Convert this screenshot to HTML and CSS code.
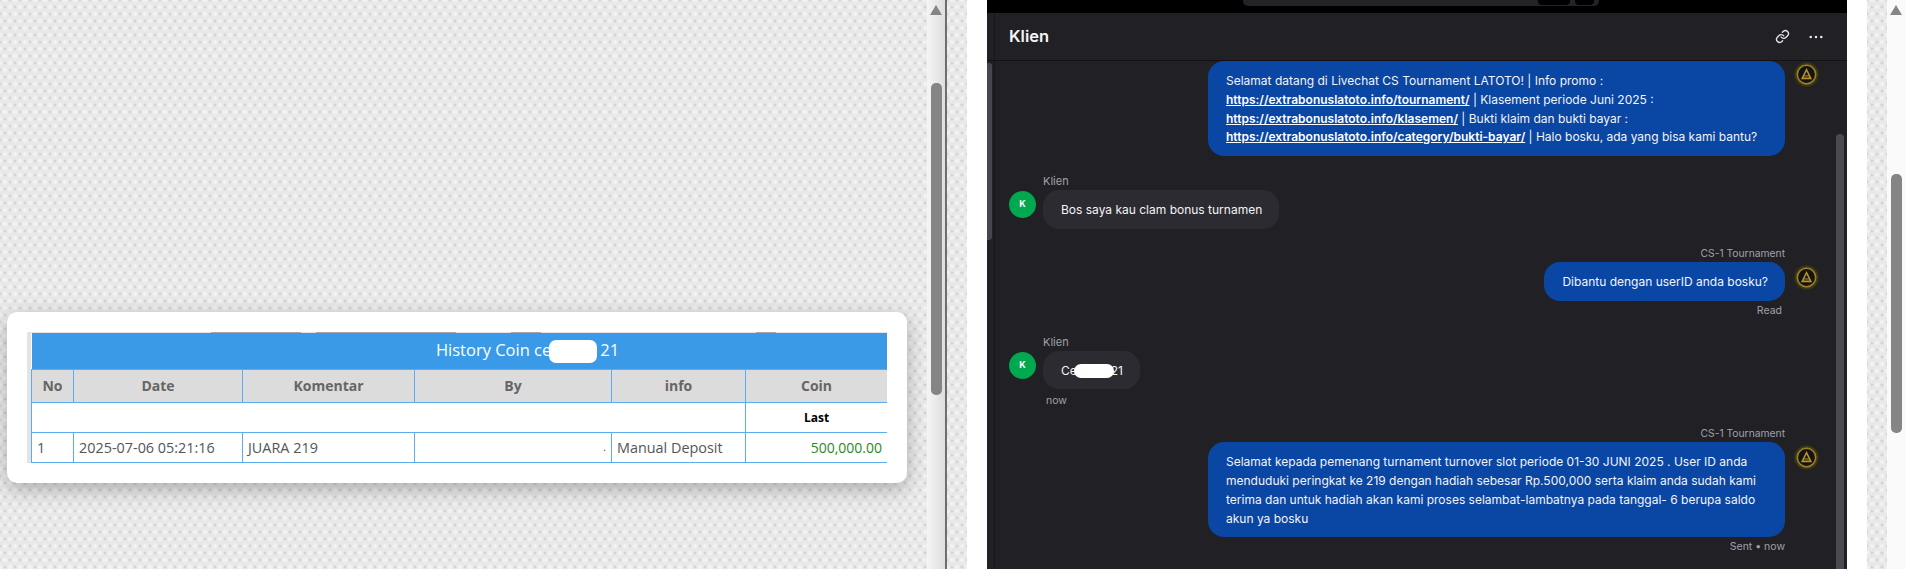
FILE: index.html
```html
<!DOCTYPE html>
<html lang="id">
<head>
    <meta charset="UTF-8">
    <title>History Coin</title>
    <link rel="stylesheet" href="styles.css">
</head>
<body>
    <svg class="defs" width="0" height="0">
        <defs>
            <radialGradient id="logo-glow">
                <stop offset="65%" stop-color="#5f5216"/>
                <stop offset="100%" stop-color="#23211a"/>
            </radialGradient>
        </defs>
        <symbol id="agent-logo" viewBox="0 0 28 28">
            <circle cx="14" cy="14" r="13.5" fill="url(#logo-glow)"/>
            <circle cx="14" cy="14" r="9.5" fill="#141416" stroke="#9c8224" stroke-width="1.6"/>
            <path d="M14 9 L18.5 18 H9.5 Z" fill="none" stroke="#b8932a" stroke-width="1.6"/>
            <path d="M11.5 15.5 H16.5" stroke="#b8932a" stroke-width="1.1"/>
        </symbol>
    </svg>

    <div class="page">
        <section class="left-pane">
            <div class="card">
                <div class="table-wrap">
                    <div class="behind-strip">
                        <i class="bit bit-a"></i><i class="bit bit-b"></i><i class="bit bit-c"></i><i class="bit bit-d"></i>
                    </div>
                    <table class="coin-table">
                        <colgroup>
                            <col class="c-no"><col class="c-date"><col class="c-komentar"><col class="c-by"><col class="c-info"><col class="c-coin"><col class="c-rest">
                        </colgroup>
                        <tr>
                            <td class="title" colspan="7">History Coin ce<span class="mask-title"></span>21</td>
                        </tr>
                        <tr class="head">
                            <th>No</th><th>Date</th><th>Komentar</th><th>By</th><th>info</th><th>Coin</th><th></th>
                        </tr>
                        <tr class="last-row">
                            <td colspan="5"></td><td class="last">Last</td><td></td>
                        </tr>
                        <tr class="row">
                            <td>1</td>
                            <td>2025-07-06 05:21:16</td>
                            <td>JUARA 219</td>
                            <td class="by">.</td>
                            <td>Manual Deposit</td>
                            <td class="coin">500,000.00</td>
                            <td></td>
                        </tr>
                    </table>
                </div>
            </div>
        </section>
        <div class="scrollbar scrollbar-left"><span class="arrow"></span><span class="thumb"></span></div>
        <div class="divider"></div>
        <div class="texture-gap"></div>
        <div class="white-gap"></div>

        <section class="chat">
            <div class="topbar">
                <div class="search"><i class="search-btn wide"></i><i class="search-btn"></i></div>
            </div>
            <header class="chat-head">
                <h1>Klien</h1>
                <div class="head-icons">
                    <svg class="icon-link" viewBox="0 0 24 24" fill="none" stroke="#e4e4e7" stroke-width="2.2" stroke-linecap="round" stroke-linejoin="round">
                        <path d="M10 13a5 5 0 0 0 7.5.5l3-3a5 5 0 0 0-7-7l-1.7 1.7"/>
                        <path d="M14 11a5 5 0 0 0-7.5-.5l-3 3a5 5 0 0 0 7 7l1.7-1.7"/>
                    </svg>
                    <svg class="icon-dots" viewBox="0 0 16 4" fill="#e4e4e7">
                        <circle cx="2" cy="2" r="1.5"/><circle cx="8" cy="2" r="1.5"/><circle cx="14" cy="2" r="1.5"/>
                    </svg>
                </div>
            </header>

            <div class="chat-body">
                <div class="msg agent first">
                    <div class="msg-row">
                        <div class="bubble blue">Selamat datang di Livechat CS Tournament LATOTO! | Info promo : <a href="#">https://extrabonuslatoto.info/tournament/</a> | Klasement periode Juni 2025 : <a href="#">https://extrabonuslatoto.info/klasemen/</a> | Bukti klaim dan bukti bayar : <a href="#">https://extrabonuslatoto.info/category/bukti-bayar/</a> | Halo bosku, ada yang bisa kami bantu?</div>
                        <svg class="avatar-logo top"><use href="#agent-logo"/></svg>
                    </div>
                </div>

                <div class="msg client">
                    <div class="sender">Klien</div>
                    <div class="msg-row">
                        <div class="avatar-k">K</div>
                        <div class="bubble grey">Bos saya kau clam bonus turnamen</div>
                    </div>
                </div>

                <div class="msg agent">
                    <div class="sender">CS-1 Tournament</div>
                    <div class="msg-row">
                        <div class="bubble blue">Dibantu dengan userID anda bosku?</div>
                        <svg class="avatar-logo"><use href="#agent-logo"/></svg>
                    </div>
                    <div class="status read">Read</div>
                </div>

                <div class="msg client">
                    <div class="sender">Klien</div>
                    <div class="msg-row">
                        <div class="avatar-k">K</div>
                        <div class="bubble grey masked">Ce<span class="mask-chat"></span>21</div>
                    </div>
                    <div class="status now">now</div>
                </div>

                <div class="msg agent">
                    <div class="sender">CS-1 Tournament</div>
                    <div class="msg-row">
                        <div class="bubble blue">Selamat kepada pemenang turnament turnover slot periode 01-30 JUNI 2025 . User ID anda menduduki peringkat ke 219 dengan hadiah sebesar Rp.500,000 serta klaim anda sudah kami terima dan untuk hadiah akan kami proses selambat-lambatnya pada tanggal- 6 berupa saldo akun ya bosku</div>
                        <svg class="avatar-logo"><use href="#agent-logo"/></svg>
                    </div>
                    <div class="status">Sent • now</div>
                </div>
            </div>

            <span class="chat-thumb-left"></span>
            <span class="chat-thumb-right"></span>
        </section>

        <div class="white-gap"></div>
        <div class="texture-gap"></div>
        <div class="scrollbar scrollbar-right"><span class="arrow"></span><span class="thumb"></span></div>
    </div>
</body>
</html>
```

FILE: styles.css
```css
* {
    box-sizing: border-box;
}

html, body {
    margin: 0;
    height: 100%;
    overflow: hidden;
}

.defs {
    position: absolute;
}

.page {
    display: flex;
    width: 1906px;
    height: 569px;
    overflow: hidden;
    font-family: "Inter", "Liberation Sans", sans-serif;
}

/* texture paper */
.left-pane, .texture-gap {
    background-color: #e8e8e8;
    background-image:
        radial-gradient(circle at 50% 50%, rgba(150, 150, 150, .38) 0, rgba(150, 150, 150, 0) 2px),
        radial-gradient(circle at 50% 50%, rgba(150, 150, 150, .38) 0, rgba(150, 150, 150, 0) 2px),
        radial-gradient(circle at 50% 50%, rgba(255, 255, 255, .6) 0, rgba(255, 255, 255, 0) 3.5px),
        radial-gradient(circle at 50% 50%, rgba(255, 255, 255, .6) 0, rgba(255, 255, 255, 0) 3.5px);
    background-size: 10px 14px, 10px 14px, 10px 14px, 10px 14px;
    background-position: 0 0, 5px 7px, 5px 0, 0 7px;
}

.left-pane {
    width: 927px;
    padding: 312px 20px 0 7px;
}

.card {
    width: 900px;
    height: 171px;
    padding: 20px;
    background: #fff;
    border-radius: 10px;
    box-shadow: 0 6px 20px rgba(0, 0, 0, .28);
}

.table-wrap {
    width: 860px;
    height: 131px;
    overflow: hidden;
    background: #e4e4e4;
    padding-left: 4px;
}

.behind-strip {
    position: relative;
    height: 1px;
}

.bit {
    position: absolute;
    top: 0;
    height: 1px;
    background: #a8a8a8;
}

.bit-a { left: 180px; width: 90px; }
.bit-b { left: 285px; width: 140px; }
.bit-c { left: 480px; width: 30px; }
.bit-d { left: 725px; width: 20px; }

.coin-table {
    border-collapse: collapse;
    table-layout: fixed;
    width: 992px;
    background: #fff;
    font-family: "Open Sans", "Liberation Sans", sans-serif;
    font-size: 14.4px;
    color: #555;
}

.c-no { width: 42px; }
.c-date { width: 169px; }
.c-komentar { width: 172px; }
.c-by { width: 197px; }
.c-info { width: 134px; }
.c-coin { width: 142px; }
.c-rest { width: 136px; }

.coin-table td, .coin-table th {
    border: 1px solid #5aaef0;
    padding: 0 5px;
    white-space: nowrap;
}

.coin-table .title {
    height: 36px;
    background: #3a9ae8;
    border: 0;
    color: #fff;
    font-size: 16.5px;
    text-align: center;
}

.mask-title {
    display: inline-block;
    width: 48px;
    height: 23px;
    margin: 0 3px 0 -2px;
    vertical-align: middle;
    background: #fff;
    border-radius: 7px;
}

.head th {
    height: 33px;
    background: #dcdcdc;
    color: #666;
    font-size: 14px;
    font-weight: 700;
}

.last-row td {
    height: 30px;
}

.coin-table .last {
    color: #000;
    font-size: 12px;
    font-weight: 700;
    text-align: center;
}

.row td {
    height: 30px;
}

.coin-table .by {
    text-align: right;
    font-size: 10px;
}

.coin-table .coin {
    color: #2b8a1e;
    font-size: 14px;
    text-align: right;
}

/* scrollbars */
.scrollbar {
    position: relative;
    flex: none;
}

.scrollbar-left {
    width: 18px;
    background: linear-gradient(to right, #f5f5f5, #dedede);
}

.scrollbar-right {
    width: 19px;
    background: #fafafa;
}

.arrow {
    position: absolute;
    top: 5px;
    left: 3px;
    border-left: 6px solid transparent;
    border-right: 6px solid transparent;
    border-bottom: 10px solid #858585;
}

.thumb {
    position: absolute;
    left: 4px;
    width: 11px;
    background: #858585;
    border-radius: 5px;
}

.scrollbar-left .thumb {
    top: 83px;
    height: 312px;
}

.scrollbar-right .thumb {
    top: 174px;
    height: 259px;
}

.divider {
    width: 2px;
    background: #6e6e6e;
}

.texture-gap {
    width: 20px;
}

.white-gap {
    width: 20px;
    background: #fff;
}

/* chat */
.chat {
    position: relative;
    display: flex;
    flex-direction: column;
    width: 860px;
    background: #202025;
    color: #f4f4f5;
    font-size: 12px;
    line-height: 18.75px;
}

.chat::before {
    content: "";
    position: absolute;
    left: 7px;
    top: 13px;
    bottom: 0;
    width: 1px;
    background: #17171a;
}

.topbar {
    height: 13px;
    flex: none;
    background: #000;
    padding-left: 256px;
}

.search {
    display: flex;
    justify-content: flex-end;
    gap: 5px;
    width: 356px;
    height: 6px;
    padding-right: 5px;
    background: #232327;
    border-radius: 0 0 5px 5px;
}

.search-btn {
    width: 19px;
    height: 5px;
    background: #000;
    border-radius: 0 0 4px 4px;
}

.search-btn.wide {
    width: 32px;
}

.chat-head {
    display: flex;
    align-items: center;
    justify-content: space-between;
    flex: none;
    height: 48px;
    padding: 0 24px 0 22px;
    border-bottom: 1px solid #121215;
}

.chat-head h1 {
    margin: 0;
    font-size: 16.5px;
    font-weight: 600;
}

.head-icons {
    display: flex;
    align-items: center;
    gap: 19px;
}

.icon-link {
    width: 15px;
    height: 15px;
}

.icon-dots {
    width: 14px;
    height: 4px;
}

.chat-body {
    flex: 1;
    overflow: hidden;
    padding: 0 27px 0 22px;
}

.msg.client {
    margin-top: 17px;
}

.msg.agent {
    display: flex;
    flex-direction: column;
    align-items: flex-end;
    margin-top: 16px;
}

.msg.first {
    margin-top: 0;
}

.msg-row {
    display: flex;
    align-items: flex-start;
}

.sender {
    height: 16px;
    font-size: 10.3px;
    line-height: 16px;
    color: #a1a1aa;
}

.client .sender {
    height: 17px;
    margin-left: 34px;
    font-size: 11px;
}

.agent .sender {
    margin-right: 35px;
}

.bubble {
    max-width: 577px;
    padding: 11px 17px 9px 18px;
    border-radius: 16px;
}

.blue {
    background: #0a46a3;
}

.blue a {
    color: #fff;
    font-weight: 600;
}

.grey {
    background: #2b2b31;
    margin-left: 7px;
}

.agent .bubble {
    margin-top: 1px;
}

.first .bubble {
    margin-top: 0;
}

.avatar-k {
    flex: none;
    display: flex;
    align-items: center;
    justify-content: center;
    width: 27px;
    height: 27px;
    margin-top: 1px;
    background: #00a84f;
    border-radius: 50%;
    color: #fff;
    font-size: 9px;
    font-weight: 700;
}

.avatar-logo {
    flex: none;
    width: 27px;
    height: 27px;
    margin-left: 8px;
    margin-top: 3px;
}

.avatar-logo.top {
    margin-top: 0;
}

.masked {
    display: flex;
    align-items: center;
    white-space: nowrap;
}

.mask-chat {
    display: inline-block;
    width: 40px;
    height: 14px;
    margin: 0 -3px;
    background: #fff;
    border-radius: 7px;
}

.status {
    height: 16px;
    margin-top: 2px;
    margin-right: 35px;
    font-size: 10.5px;
    line-height: 16px;
    color: #a1a1aa;
}

.status.read {
    margin-right: 38px;
    margin-bottom: -2px;
}

.status.now {
    margin: 4px 0 1px 37px;
}

.chat-thumb-left {
    position: absolute;
    left: 0;
    top: 63px;
    width: 5px;
    height: 177px;
    background: #46464e;
    border-radius: 0 3px 3px 0;
}

.chat-thumb-right {
    position: absolute;
    right: 3px;
    top: 134px;
    width: 8px;
    height: 440px;
    background: #4a4a52;
    border-radius: 4px;
}
```
